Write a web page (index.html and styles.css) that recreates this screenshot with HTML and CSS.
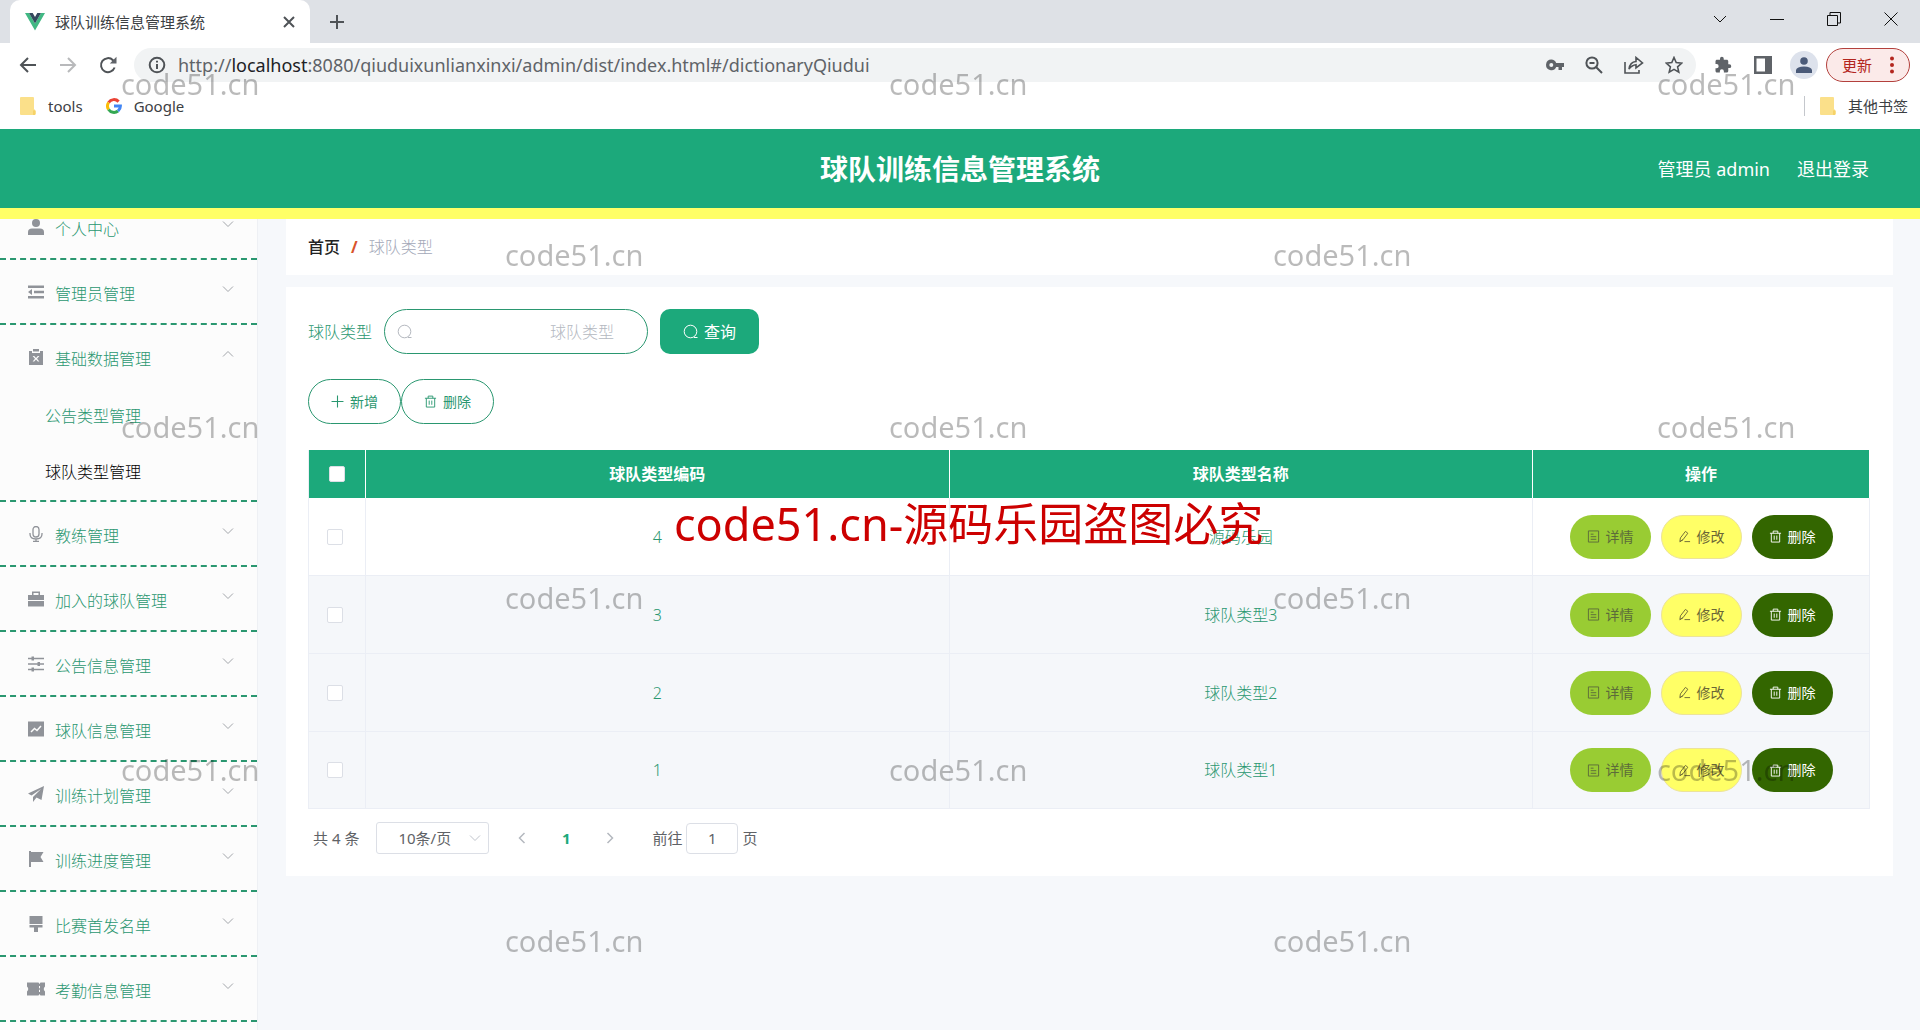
FILE: index.html
```html
<!DOCTYPE html>
<html lang="zh-CN">
<head>
<meta charset="utf-8">
<title>球队训练信息管理系统</title>
<link rel="stylesheet" href="styles.css">
</head>
<body>
<svg class="defs" aria-hidden="true">
  <symbol id="search" viewBox="0 0 16 16"><circle cx="7.5" cy="7.5" r="6.3"/><path d="M11 13.500H14.500"/></symbol>
  <symbol id="down" viewBox="0 0 12 12"><path d="M1 3.5L6 8.5L11 3.5"/></symbol>
  <symbol id="trash" viewBox="0 0 14 14"><path d="M1 3.5H13M4.5 3.5V1.2H9.5V3.5M2.5 3.5V13H11.5V3.5M5.6 6V10.5M8.4 6V10.5"/></symbol>
  <symbol id="doc" viewBox="0 0 14 14"><path d="M1.5 1H12.500V13H1.500ZM4 4.500H7M4 7.200H10M4 10H10"/></symbol>
  <symbol id="edit" viewBox="0 0 14 14"><path d="M2 12.500L2.600 8.500L8 1.500L10.600 3.500L5.300 10.500ZM2 12.500L5.300 10.500M7 12.500H13"/></symbol>
  <symbol id="folder" viewBox="0 0 16 18"><path d="M1 0H13Q14 0 14 1V12L16 14V17L15 18H1Q0 18 0 17V1Q0 0 1 0Z" fill="#fbe08a"/><path d="M13 18V14Q14 12 15 14V18" fill="#f6d268"/></symbol>
</svg>

<div class="shell">
  <header class="browser">
    <div class="tabs">
      <div class="tab">
        <svg width="20" height="18" viewBox="0 0 20 18"><path d="M0 0H4L10 10.500L16 0H20L10 17.500Z" fill="#41b883"/><path d="M4 0H7.700L10 4L12.300 0H16L10 10.500Z" fill="#34495e"/></svg>
        <span class="tab-title">球队训练信息管理系统</span>
        <button class="icon-btn" aria-label="关闭标签页"><svg class="line2" width="12" height="12" viewBox="0 0 12 12"><path d="M1 1L11 11M11 1L1 11"/></svg></button>
      </div>
      <button class="icon-btn new-tab" aria-label="新标签页"><svg class="line2" width="16" height="16" viewBox="0 0 16 16"><path d="M8 1V15M1 8H15"/></svg></button>
      <div class="window-btns">
        <button class="icon-btn" aria-label="搜索标签页"><svg class="line1" width="14" height="14" viewBox="0 0 14 14"><path d="M1 4L7 10L13 4"/></svg></button>
        <button class="icon-btn" aria-label="最小化"><svg class="line1" width="14" height="14" viewBox="0 0 14 14"><path d="M0 7.500H14"/></svg></button>
        <button class="icon-btn" aria-label="还原"><svg class="line1" width="14" height="14" viewBox="0 0 14 14"><path d="M.5 3.500H10.500V13.500H.5ZM3 3.500V.5H13.500V11H10.500"/></svg></button>
        <button class="icon-btn" aria-label="关闭"><svg class="line1" width="14" height="14" viewBox="0 0 14 14"><path d="M.5 .5L13.500 13.500M13.500 .5L.5 13.500"/></svg></button>
      </div>
    </div>
    <div class="toolbar">
      <div class="nav-btns">
        <button class="icon-btn" aria-label="后退"><svg class="line2" width="18" height="16" viewBox="0 0 18 16"><path d="M17 8H2M9 1L2 8L9 15"/></svg></button>
        <button class="icon-btn faded" aria-label="前进"><svg class="line2" width="18" height="16" viewBox="0 0 18 16"><path d="M1 8H16M9 1L16 8L9 15"/></svg></button>
        <button class="icon-btn" aria-label="刷新"><svg class="line2" width="18" height="18" viewBox="0 0 18 18"><path d="M15.600 11.500A7 7 0 1 1 14 4.200L16 6.200"/><path d="M17.500 .8V7.500H10.800Z" fill="#5f6368" stroke="none"/></svg></button>
      </div>
      <div class="omnibox">
        <svg class="line2" width="18" height="18" viewBox="0 0 18 18"><circle cx="9" cy="9" r="7.300"/><path d="M9 8V13M9 4.800V6.600"/></svg>
        <span class="url">http://<b>localhost</b>:8080/qiuduixunlianxinxi/admin/dist/index.html#/dictionaryQiudui</span>
        <div class="omni-btns">
          <button class="icon-btn" aria-label="密码"><svg width="18" height="12" viewBox="0 0 18 12"><path fill="#5f6368" fill-rule="evenodd" d="M5.300 .5A5.300 5.300 0 0 1 10.200 4H18V8H16V11H12.500V8H10.200A5.300 5.300 0 1 1 5.300 .5ZM5.300 4A2 2 0 1 0 5.300 8A2 2 0 1 0 5.300 4Z"/></svg></button>
          <button class="icon-btn" aria-label="缩放"><svg class="line2" width="18" height="18" viewBox="0 0 18 18"><circle cx="7" cy="7" r="5.600"/><path d="M11 11L17 17M4.500 7H9.500"/></svg></button>
          <button class="icon-btn" aria-label="分享"><svg class="line2 thin" width="20" height="18" viewBox="0 0 20 18"><path d="M1 6V17H15V14M5 13Q6 6 12 5.500V1.500L18.500 7L12 12V8.700Q8 9 5 13Z"/></svg></button>
          <button class="icon-btn" aria-label="收藏"><svg class="line2 thin" width="18" height="18" viewBox="0 0 18 18"><path d="M9 1.500L11.200 6.600L16.800 7.100L12.600 10.800L13.800 16.200L9 13.400L4.200 16.200L5.400 10.800L1.200 7.100L6.800 6.600Z"/></svg></button>
        </div>
      </div>
      <div class="ext-btns">
        <button class="icon-btn" aria-label="扩展程序"><svg width="18" height="18" viewBox="0 0 24 24"><path fill="#5f6368" d="M20.500 11H19V7c0-1.100-.9-2-2-2h-4V3.500a2.500 2.500 0 0 0-5 0V5H4c-1.100 0-2 .9-2 2v3.800h1.500a2.700 2.700 0 0 1 0 5.400H2V20c0 1.100.9 2 2 2h3.800v-1.500a2.700 2.700 0 0 1 5.400 0V22H17c1.100 0 2-.9 2-2v-4h1.500a2.500 2.500 0 0 0 0-5Z"/></svg></button>
        <button class="icon-btn" aria-label="侧边栏"><svg width="18" height="18" viewBox="0 0 18 18"><path fill="#5f6368" fill-rule="evenodd" d="M0 0H18V18H0ZM2.500 2.500V15.500H11V2.500Z"/></svg></button>
        <button class="icon-btn avatar" aria-label="个人资料"><svg width="16" height="16" viewBox="0 0 16 16"><circle cx="8" cy="4" r="3.800" fill="#4a5a78"/><path fill="#4a5a78" d="M0 16V13Q1 9.500 8 9.500T16 13V16Z"/></svg></button>
        <button class="update">更新<svg width="4" height="18" viewBox="0 0 4 18"><circle cx="2" cy="2.500" r="2"/><circle cx="2" cy="9" r="2"/><circle cx="2" cy="15.500" r="2"/></svg></button>
      </div>
    </div>
    <div class="bookmarks">
      <a class="bookmark" href="#"><svg width="16" height="18"><use href="#folder"/></svg>tools</a>
      <a class="bookmark" href="#"><svg width="16" height="16" viewBox="0 0 16 16" fill="none" stroke-width="3"><path d="M2.600 4.500A6.400 6.400 0 0 1 12.600 3.600" stroke="#ea4335"/><path d="M2.600 4.500A6.400 6.400 0 0 0 2.600 11.500" stroke="#fbbc05"/><path d="M2.600 11.500A6.400 6.400 0 0 0 12 13" stroke="#34a853"/><path d="M12 13A6.400 6.400 0 0 0 14.400 8H8" stroke="#4285f4"/></svg>Google</a>
      <a class="bookmark other" href="#"><svg width="16" height="18"><use href="#folder"/></svg>其他书签</a>
    </div>
  </header>

  <header class="app-header">
    <h1>球队训练信息管理系统</h1>
    <div class="user"><span>管理员 admin</span><a href="#">退出登录</a></div>
  </header>

  <div class="app">
    <nav class="sidebar">
      <ul class="menu">
        <li><a class="item" href="#"><svg class="glyph" viewBox="0 0 16 16"><circle cx="8" cy="4" r="4"/><path d="M0 16V13Q0 9.500 4 9.500H12Q16 9.500 16 13V16Z"/></svg>个人中心<svg class="arrow"><use href="#down"/></svg></a></li>
        <li><a class="item" href="#"><svg class="glyph" viewBox="0 0 16 16"><path d="M0 1.500H16V4H0ZM6 6.800H16V9.200H6ZM0 12H16V14.500H0ZM4 5V11L0 8Z"/></svg>管理员管理<svg class="arrow"><use href="#down"/></svg></a></li>
        <li>
          <a class="item" href="#"><svg class="glyph" viewBox="0 0 16 16"><path fill-rule="evenodd" d="M1 2H4V4H12V2H15V16H1ZM5 0H11V2.500H5ZM4.600 7L7 9.700L4.600 12.500H6.200L8 10.500L9.800 12.500H11.400L9 9.700L11.400 7H9.800L8 9L6.200 7Z"/></svg>基础数据管理<svg class="arrow open"><use href="#down"/></svg></a>
          <ul class="submenu">
            <li><a href="#">公告类型管理</a></li>
            <li><a class="current" href="#">球队类型管理</a></li>
          </ul>
        </li>
        <li><a class="item" href="#"><svg class="glyph stroke" viewBox="0 0 16 16"><path d="M5 3.500A3 3 0 0 1 11 3.500V8A3 3 0 0 1 5 8ZM2 7V8Q2 13 8 13T14 8V7M8 13V15.500M5 15.500H11"/></svg>教练管理<svg class="arrow"><use href="#down"/></svg></a></li>
        <li><a class="item" href="#"><svg class="glyph" viewBox="0 0 16 16"><path fill-rule="evenodd" d="M4 4V.5H12V4H16V9H0V4ZM5.500 2V4H10.500V2ZM0 10H16V15.500H0Z"/></svg>加入的球队管理<svg class="arrow"><use href="#down"/></svg></a></li>
        <li><a class="item" href="#"><svg class="glyph" viewBox="0 0 16 16"><path d="M0 1.700H3.500V.5H6V1.700H16V3.300H6V4.500H3.500V3.300H0ZM0 7.200H9.500V6H12V7.200H16V8.800H12V10H9.500V8.800H0ZM0 12.700H3.500V11.500H6V12.700H16V14.300H6V15.500H3.500V14.300H0Z"/></svg>公告信息管理<svg class="arrow"><use href="#down"/></svg></a></li>
        <li><a class="item" href="#"><svg class="glyph" viewBox="0 0 16 16"><path d="M0 .5H16V15.500H0Z"/><path class="cut" d="M3 11L6.500 7.500L9 9.500L13 5"/></svg>球队信息管理<svg class="arrow"><use href="#down"/></svg></a></li>
        <li><a class="item" href="#"><svg class="glyph" viewBox="0 0 16 16"><path d="M16 0L13.500 14L8.500 11.500L5 16V11L13 3L3.500 9.500L0 7.500Z"/></svg>训练计划管理<svg class="arrow"><use href="#down"/></svg></a></li>
        <li><a class="item" href="#"><svg class="glyph" viewBox="0 0 16 16"><path d="M1 0H3V1H15.500L12.500 6L15.500 11H3V16H1Z"/></svg>训练进度管理<svg class="arrow"><use href="#down"/></svg></a></li>
        <li><a class="item" href="#"><svg class="glyph" viewBox="0 0 16 16"><path d="M1.500 0H14.500V8H1.500ZM1.500 9H14.500V11.500H10V16H6V11.500H1.500Z"/></svg>比赛首发名单<svg class="arrow"><use href="#down"/></svg></a></li>
        <li><a class="item" href="#"><svg class="glyph wide" viewBox="0 0 18 16"><path d="M0 1.500H11.500L12.500 3L13.500 1.500H18V5.500Q15.500 8 18 10.500V14.500H13.500L12.500 13L11.500 14.500H0V10.500Q2.500 8 0 5.500ZM12 5V7.200H13V5ZM12 8.800V11H13V8.800Z" fill-rule="evenodd"/></svg>考勤信息管理<svg class="arrow"><use href="#down"/></svg></a></li>
      </ul>
    </nav>

    <main class="main">
      <nav class="card crumbs"><a href="#">首页</a><i>/</i><span>球队类型</span></nav>
      <section class="card content">
        <form class="search">
          <label for="q">球队类型</label>
          <div class="search-box"><svg width="16" height="16"><use href="#search"/></svg><input id="q" type="text" placeholder="球队类型"></div>
          <button class="query" type="button"><svg width="16" height="16"><use href="#search"/></svg>查询</button>
        </form>
        <div class="actions">
          <button class="pill outline"><svg viewBox="0 0 12 12"><path d="M6 .5V11.500M.5 6H11.500"/></svg>新增</button><button class="pill outline"><svg><use href="#trash"/></svg>删除</button>
        </div>
        <table>
          <colgroup><col class="c-check"><col><col><col class="c-ops"></colgroup>
          <thead><tr><th><input type="checkbox" aria-label="全选"></th><th>球队类型编码</th><th>球队类型名称</th><th>操作</th></tr></thead>
          <tbody>
            <tr><td><input type="checkbox" aria-label="选择 4"></td><td>4</td><td>源码乐园</td><td><div class="ops"><button class="pill detail"><svg><use href="#doc"/></svg>详情</button><button class="pill modify"><svg><use href="#edit"/></svg>修改</button><button class="pill remove"><svg><use href="#trash"/></svg>删除</button></div></td></tr>
            <tr><td><input type="checkbox" aria-label="选择 3"></td><td>3</td><td>球队类型3</td><td><div class="ops"><button class="pill detail"><svg><use href="#doc"/></svg>详情</button><button class="pill modify"><svg><use href="#edit"/></svg>修改</button><button class="pill remove"><svg><use href="#trash"/></svg>删除</button></div></td></tr>
            <tr><td><input type="checkbox" aria-label="选择 2"></td><td>2</td><td>球队类型2</td><td><div class="ops"><button class="pill detail"><svg><use href="#doc"/></svg>详情</button><button class="pill modify"><svg><use href="#edit"/></svg>修改</button><button class="pill remove"><svg><use href="#trash"/></svg>删除</button></div></td></tr>
            <tr><td><input type="checkbox" aria-label="选择 1"></td><td>1</td><td>球队类型1</td><td><div class="ops"><button class="pill detail"><svg><use href="#doc"/></svg>详情</button><button class="pill modify"><svg><use href="#edit"/></svg>修改</button><button class="pill remove"><svg><use href="#trash"/></svg>删除</button></div></td></tr>
          </tbody>
        </table>
        <div class="pager">
          <span>共 4 条</span>
          <div class="size"><select aria-label="每页条数"><option>10条/页</option></select><svg width="12" height="12"><use href="#down"/></svg></div>
          <div class="pages">
            <button aria-label="上一页"><svg width="12" height="12" viewBox="0 0 12 12"><path d="M8.500 1L3.500 6L8.500 11"/></svg></button>
            <button class="on">1</button>
            <button aria-label="下一页"><svg width="12" height="12" viewBox="0 0 12 12"><path d="M3.500 1L8.500 6L3.500 11"/></svg></button>
          </div>
          <label class="jump">前往<input type="text" value="1">页</label>
        </div>
      </section>
    </main>
  </div>
</div>

<div class="marks">
  <div class="mark-row"><span>code51.cn</span><span>code51.cn</span><span>code51.cn</span></div>
  <div class="mark-row shift"><span>code51.cn</span><span>code51.cn</span></div>
  <div class="mark-row"><span>code51.cn</span><span>code51.cn</span><span>code51.cn</span></div>
  <div class="mark-row shift"><span>code51.cn</span><span>code51.cn</span></div>
  <div class="mark-row"><span>code51.cn</span><span>code51.cn</span><span>code51.cn</span></div>
  <div class="mark-row shift"><span>code51.cn</span><span>code51.cn</span></div>
</div>
<div class="notice">code51.cn-源码乐园盗图必究</div>
</body>
</html>
```
FILE: styles.css
```css
:root {
  --green: #1ca97b;
  --green-text: #2a9770;
  --yellow: #ffff66;
  --grey: #5f6368;
  --line: #ebeef5;
}
* { box-sizing: border-box; }
body {
  margin: 0;
  font-family: "Noto Sans", "Noto Sans CJK SC", sans-serif;
  font-size: 16px;
  line-height: 24px;
  font-weight: 300;
  color: #606266;
  background: #f6f8fb;
}
a { color: inherit; text-decoration: none; }
ul { list-style: none; margin: 0; padding: 0; }
button, input, select { font: inherit; color: inherit; }
button { border: 0; padding: 0; background: none; cursor: pointer; }
svg { flex: none; }
.defs { display: none; }
.shell { display: flex; flex-direction: column; height: 100vh; overflow: hidden; }

/* browser frame */
.browser { flex: none; background: #fff; color: #3c4043; font-weight: 400; }
.icon-btn { display: flex; align-items: center; justify-content: center; }
.line1 { fill: none; stroke: #111; stroke-width: 1; }
.line2 { fill: none; stroke: #4f5357; stroke-width: 2; }
.thin { stroke-width: 1.6; }
.faded { opacity: .4; }
.tabs { display: flex; align-items: center; height: 43px; padding-left: 10px; background: #dee1e6; }
.tab { display: flex; align-items: center; align-self: stretch; width: 300px; padding: 0 15px; background: #fff; border-radius: 10px 10px 0 0; }
.tab-title { flex: 1; padding-left: 10px; font-size: 15px; }
.new-tab { margin-left: 19px; }
.window-btns { display: flex; gap: 43px; margin-left: auto; padding: 0 22px 6px 0; }
.toolbar { display: flex; align-items: center; height: 45px; padding: 0 10px 1px 19px; }
.nav-btns { display: flex; gap: 22px; }
.omnibox { display: flex; flex: 1; align-items: center; height: 34px; margin-left: 17px; padding: 0 13px 0 14px; border-radius: 17px; background: #f1f3f4; }
.url { flex: 1; padding-left: 12px; font-size: 18px; color: #5f6368; white-space: nowrap; }
.url b { font-weight: 400; color: #202124; }
.omni-btns { display: flex; gap: 21px; }
.ext-btns { display: flex; align-items: center; gap: 18px; margin-left: 18px; }
.ext-btns .icon-btn + .icon-btn { margin-left: 4px; }
.ext-btns .avatar.icon-btn { width: 28px; height: 28px; margin-left: 0; border-radius: 50%; background: #dde2ec; }
.update { display: flex; align-items: center; gap: 18px; width: 84px; height: 34px; margin-left: -10px; padding: 0 15px; border: 1px solid #b3403c; border-radius: 17px; background: #fbeae9; color: #b3261e; font-size: 15px; fill: #b3261e; }
.bookmarks { display: flex; align-items: center; height: 41px; padding: 0 12px 6px 20px; gap: 23px; }
.bookmark { display: flex; align-items: center; gap: 12px; font-size: 15px; }
.bookmark.other { margin-left: auto; padding-left: 15px; border-left: 1px solid #c4c7cc; line-height: 20px; }

/* application header */
.app-header { display: flex; flex: none; align-items: center; justify-content: center; position: relative; height: 90px; border-bottom: 11px solid var(--yellow); background: var(--green); color: #fff; }
.app-header h1 { margin: 0; font-size: 28px; line-height: 40px; font-weight: 700; }
.user { display: flex; gap: 27px; position: absolute; right: 51px; font-size: 18px; font-weight: 400; }

/* side menu */
.app { display: flex; flex: 1; min-height: 0; }
.sidebar { flex: none; width: 258px; overflow: hidden; background: #fcfcfc; border-right: 1px solid #eef0f4; }
.menu { margin-top: -24px; }
.menu > li { border-bottom: 2px dashed var(--green-text); }
.item { display: flex; align-items: center; height: 63px; padding: 4px 23px 0 28px; color: var(--green-text); }
.glyph { width: 16px; height: 16px; margin: 0 11px 4px 0; fill: #909399; }
.glyph.wide { width: 18px; margin: 0 10px 4px -1px; }
.glyph.stroke { fill: none; stroke: #909399; stroke-width: 1.3; }
.glyph .cut { fill: none; stroke: #fcfcfc; stroke-width: 1.5; }
.arrow { width: 12px; height: 12px; margin: 0 0 10px auto; fill: none; stroke: #a3a6ab; }
.arrow.open { transform: rotate(180deg); }
.submenu a { display: block; padding-left: 45px; line-height: 56px; color: var(--green-text); }
.submenu .current { color: #000; }

/* content */
.main { flex: 1; padding: 0 27px 0 28px; }
.card { background: #fff; }
.crumbs { display: flex; align-items: center; gap: 11px; height: 56px; margin-bottom: 12px; padding: 0 22px; color: #a3a8b8; }
.crumbs a { color: #222; font-weight: 500; }
.crumbs i { font-style: normal; font-weight: 700; color: #d9532c; }
.content { padding: 22px 23px 22px 22px; }
.search { display: flex; align-items: center; gap: 12px; margin-bottom: 25px; }
.search label { color: var(--green-text); }
.search-box { display: flex; align-items: center; width: 264px; height: 45px; padding: 0 33px 0 12px; border: 1px solid var(--green-text); border-radius: 23px; stroke: #b4b8bf; fill: none; }
.search-box input { flex: 1; min-width: 0; padding: 0; border: 0; outline: 0; background: none; text-align: right; }
.search-box input::placeholder { color: #b4b8bf; }
.query { display: flex; align-items: center; justify-content: center; gap: 5px; width: 99px; height: 45px; border-radius: 10px; background: var(--green); color: #fff; font-weight: 400; stroke: #fff; fill: none; }
.actions { display: flex; margin-bottom: 26px; }
.pill { display: flex; align-items: center; justify-content: center; gap: 6px; width: 81px; height: 44px; border-radius: 22px; font-size: 14px; font-weight: 400; stroke: currentColor; fill: none; }
.pill svg { width: 13px; height: 13px; }
.outline { width: 93px; height: 45px; border: 1px solid var(--green-text); border-radius: 23px; color: var(--green-text); }
.detail { background: #99cc33; color: #5c6b3a; }
.modify { background: var(--yellow); border: 1px solid #ece39a; color: #6b6636; }
.remove { background: #336600; color: #fff; }

table { width: 100%; table-layout: fixed; border-collapse: separate; border-spacing: 0; border-left: 1px solid var(--line); text-align: center; }
.c-check { width: 57px; }
.c-ops { width: 337px; }
th { height: 48px; padding: 0; background: var(--green); color: #fff; font-weight: 700; border-right: 1px solid #fff; }
td { height: 78px; padding: 0; color: var(--green-text); border-right: 1px solid var(--line); border-bottom: 1px solid var(--line); }
tbody tr:last-child td { height: 77px; }
tbody tr + tr { background: #f5f7fa; }
.ops { display: flex; justify-content: center; gap: 10px; }
input[type="checkbox"] { appearance: none; display: block; width: 16px; height: 16px; margin: 0 18px; border: 1px solid #dcdfe6; border-radius: 2px; background: #fff; }
th input[type="checkbox"] { margin-left: 20px; }

.pager { display: flex; align-items: center; margin-top: 13px; padding-left: 5px; font-size: 15px; font-weight: 400; }
.size { display: flex; align-items: center; position: relative; margin-left: 17px; }
.size select { appearance: none; width: 113px; height: 32px; padding: 0 21px; border: 1px solid #dcdfe6; border-radius: 3px; background: #fff; }
.size svg { position: absolute; right: 8px; fill: none; stroke: #c0c4cc; }
.pages { display: flex; margin-left: 11px; }
.pages button { display: flex; align-items: center; justify-content: center; width: 44px; height: 32px; fill: none; stroke: #b4b8bf; stroke-width: 1.5; }
.pages .on { color: var(--green); font-weight: 700; }
.jump { display: flex; align-items: center; gap: 4px; margin-left: 20px; }
.jump input { width: 52px; height: 31px; padding: 0; border: 1px solid #dcdfe6; border-radius: 4px; text-align: center; background: #fff; }

/* overlaid marks */
.marks { position: fixed; inset: 0; overflow: hidden; pointer-events: none; padding-top: 64px; color: rgba(0, 0, 0, .27); font-size: 29px; line-height: 40px; font-weight: 400; }
.mark-row { display: flex; height: 16.6%; padding-left: 6.3%; }
.mark-row.shift { padding-left: 26.3%; }
.mark-row { flex: none; height: 16.65vh; }
.mark-row span { flex: none; width: 40vw; }
.notice { position: fixed; left: 35.1%; top: 492px; pointer-events: none; color: #cc0000; font-size: 45px; line-height: 64px; font-weight: 400; white-space: nowrap; }
```
